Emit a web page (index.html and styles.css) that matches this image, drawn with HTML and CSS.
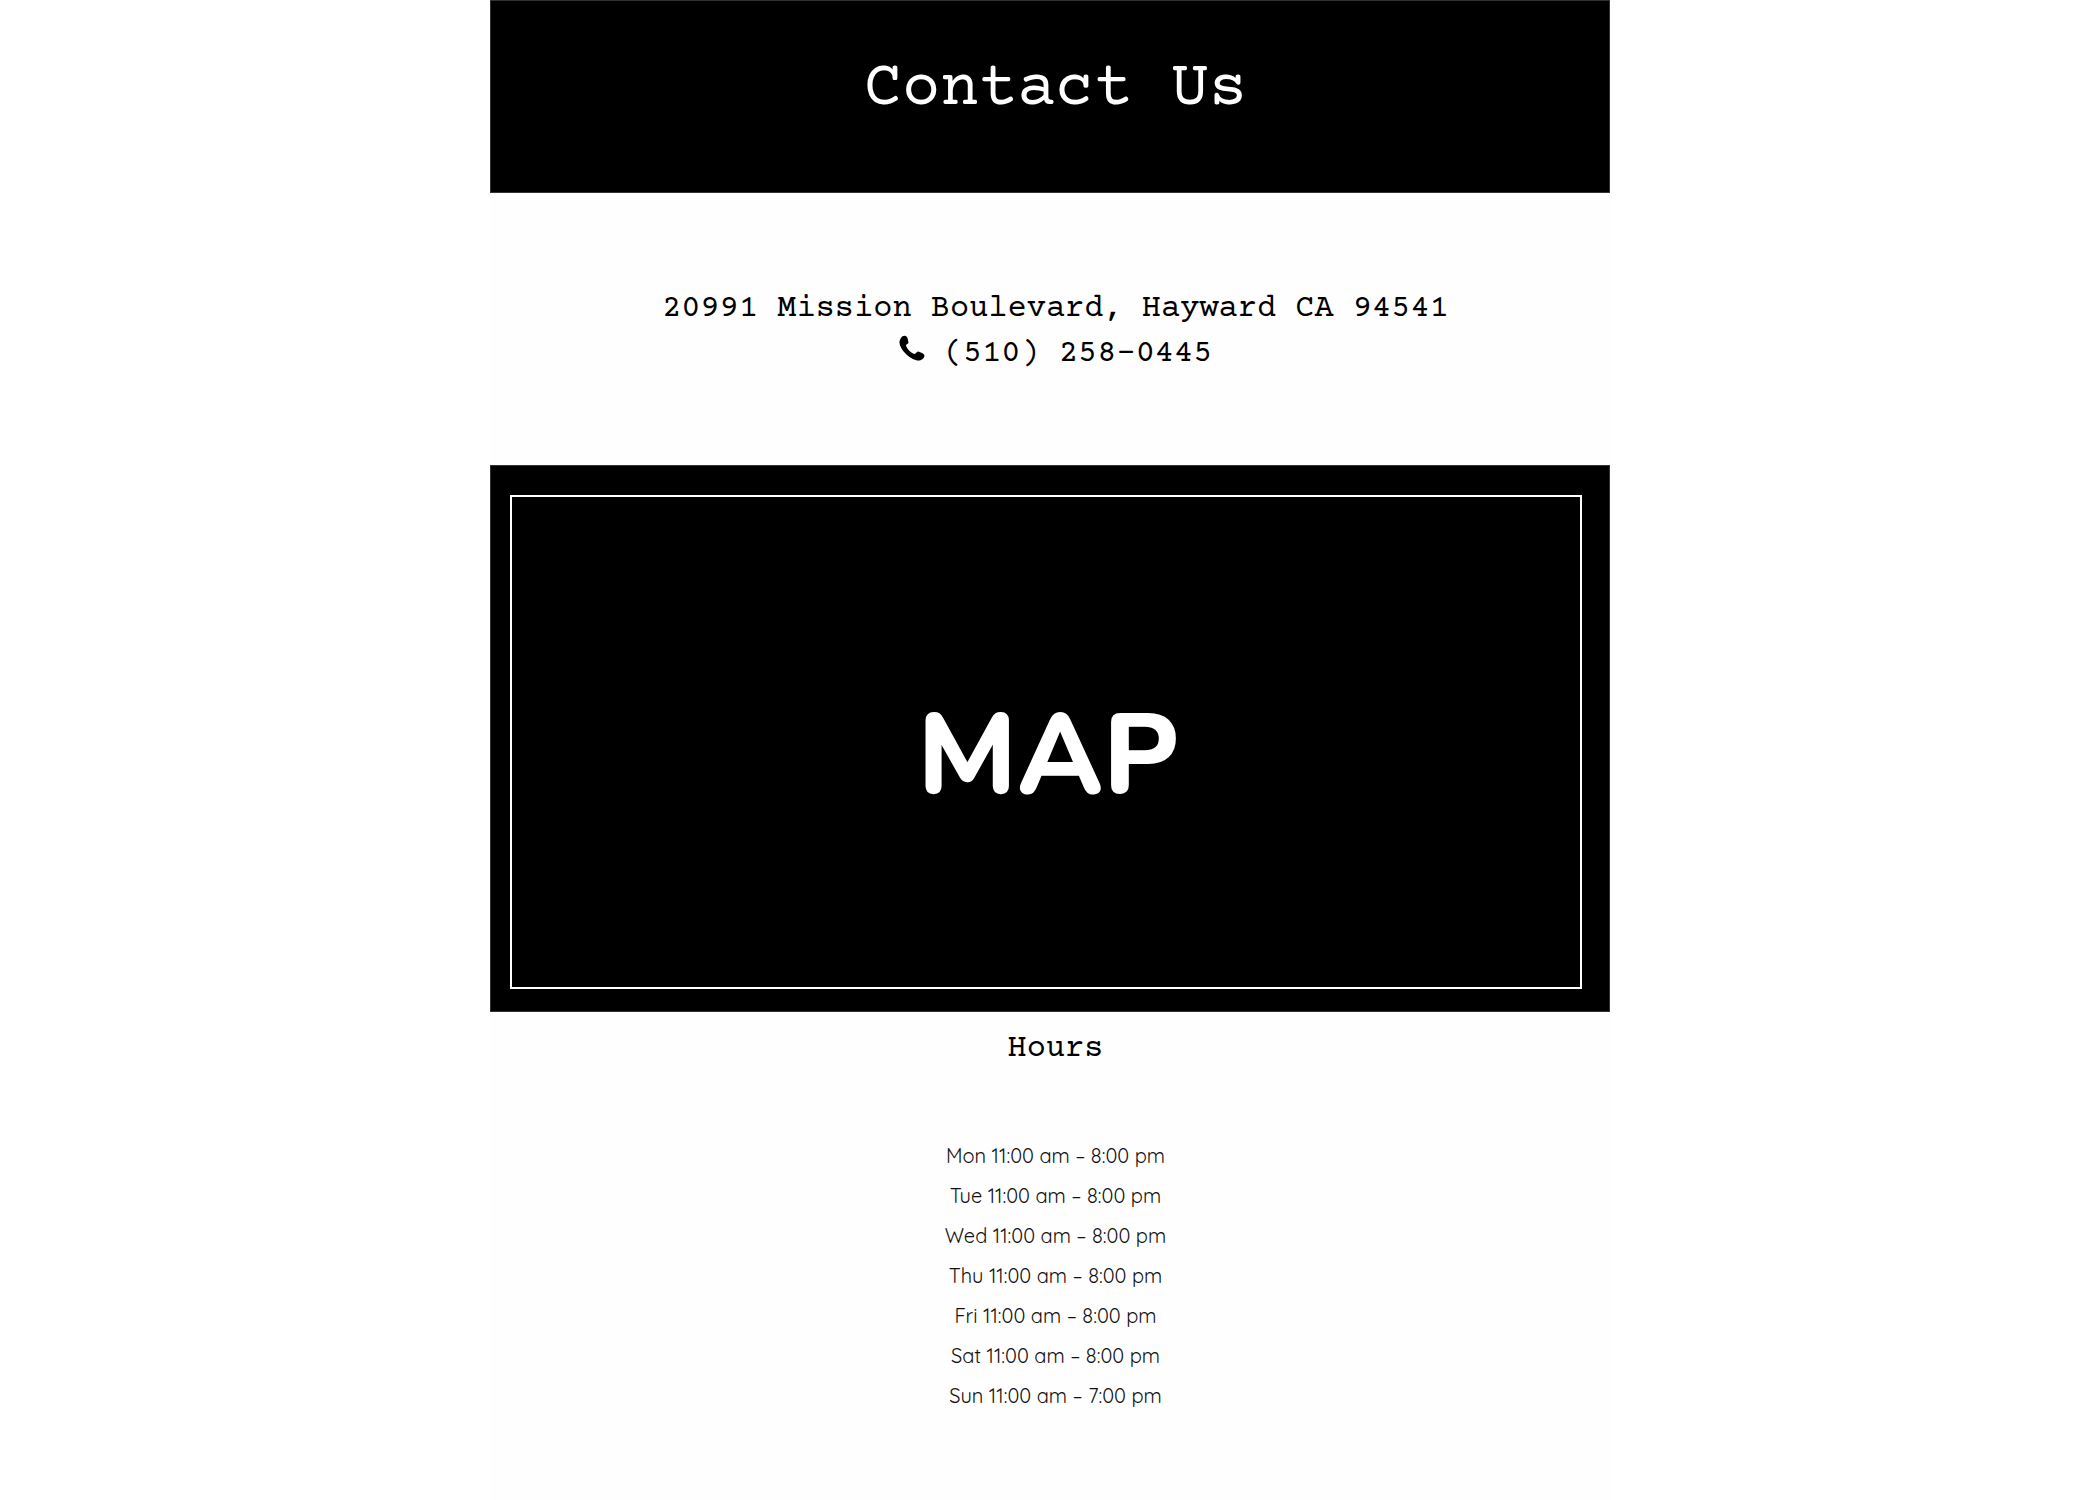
FILE: index.html
```
<!DOCTYPE html>
<html lang="en">
<head>
<meta charset="utf-8">
<meta name="viewport" content="width=device-width, initial-scale=1">
<title>Contact Us</title>
<link rel="stylesheet" href="styles.css">
</head>
<body>
<main class="page">
  <header class="banner">
    <h1 class="banner-title">Contact Us</h1>
  </header>
  <address class="contact">
    <p class="contact-line">20991 Mission Boulevard, Hayward CA 94541</p>
    <p class="contact-line">
      <svg class="phone-icon" viewBox="0 0 26 26" aria-hidden="true"><path d="M2 3C3 1 6 0 7.500 1.500C9 3 9 6 9.500 7.500C9.500 9 7 9 7 10.500C8 14 12 18 15.500 19C17 19 17.500 16.500 19 16.500C21 17 24 18 25 19.500C26.500 21.500 24 25 20.500 25.500C12 26 1 15 .5 7.500C.5 6 1 4 2 3Z"/></svg>
      (510) 258-0445
    </p>
  </address>
  <section class="map" aria-label="Map">
    <div class="map-frame">
      <span class="map-label">MAP</span>
    </div>
  </section>
  <section class="hours">
    <h2 class="hours-title">Hours</h2>
    <ul class="hours-list">
      <li>Mon 11:00 am – 8:00 pm</li>
      <li>Tue 11:00 am – 8:00 pm</li>
      <li>Wed 11:00 am – 8:00 pm</li>
      <li>Thu 11:00 am – 8:00 pm</li>
      <li>Fri 11:00 am – 8:00 pm</li>
      <li>Sat 11:00 am – 8:00 pm</li>
      <li>Sun 11:00 am – 7:00 pm</li>
    </ul>
  </section>
</main>
</body>
</html>
```
FILE: styles.css
```
* {
  box-sizing: border-box;
}

body {
  margin: 0;
  background: #fff;
  color: #000;
  font-family: "Courier Prime", "Liberation Mono", monospace;
}

h1, h2, p, ul {
  margin: 0;
  padding: 0;
  font-weight: 400;
}

.page {
  max-width: 1120px;
  min-height: 100vh;
  margin: 0 auto;
  background: #fefefe;
}

.banner {
  padding: 53px 0 66px 11px;
  border: 1px solid #333;
  background: #000;
  color: #fff;
  text-align: center;
}

.banner-title {
  font-size: 64px;
  line-height: 72px;
}

.contact {
  padding: 94px 0 88px 11px;
  font-size: 32px;
  font-style: normal;
  line-height: 45px;
  text-align: center;
}

.phone-icon {
  width: 26px;
  height: 26px;
}

.map {
  padding: 29px 27px 22px 19px;
  border: 1px solid #333;
  background: #000;
}

.map-frame {
  padding: 199px 0 171px;
  border: 2px solid #fff;
  color: #fff;
  text-align: center;
}

.map-label {
  display: block;
  padding-left: 4px;
  font-family: "Arial Rounded MT Bold", Nunito, "Varela Round", "Liberation Sans", sans-serif;
  font-size: 114px;
  font-weight: 800;
  line-height: 120px;
}

.hours {
  padding: 15px 0 48px 11px;
  text-align: center;
}

.hours-title {
  font-size: 32px;
  line-height: 45px;
}

.hours-list {
  margin-top: 64px;
  color: #111;
  font-family: Quicksand, Lato, sans-serif;
  font-size: 20px;
  line-height: 40px;
  list-style: none;
}
```
